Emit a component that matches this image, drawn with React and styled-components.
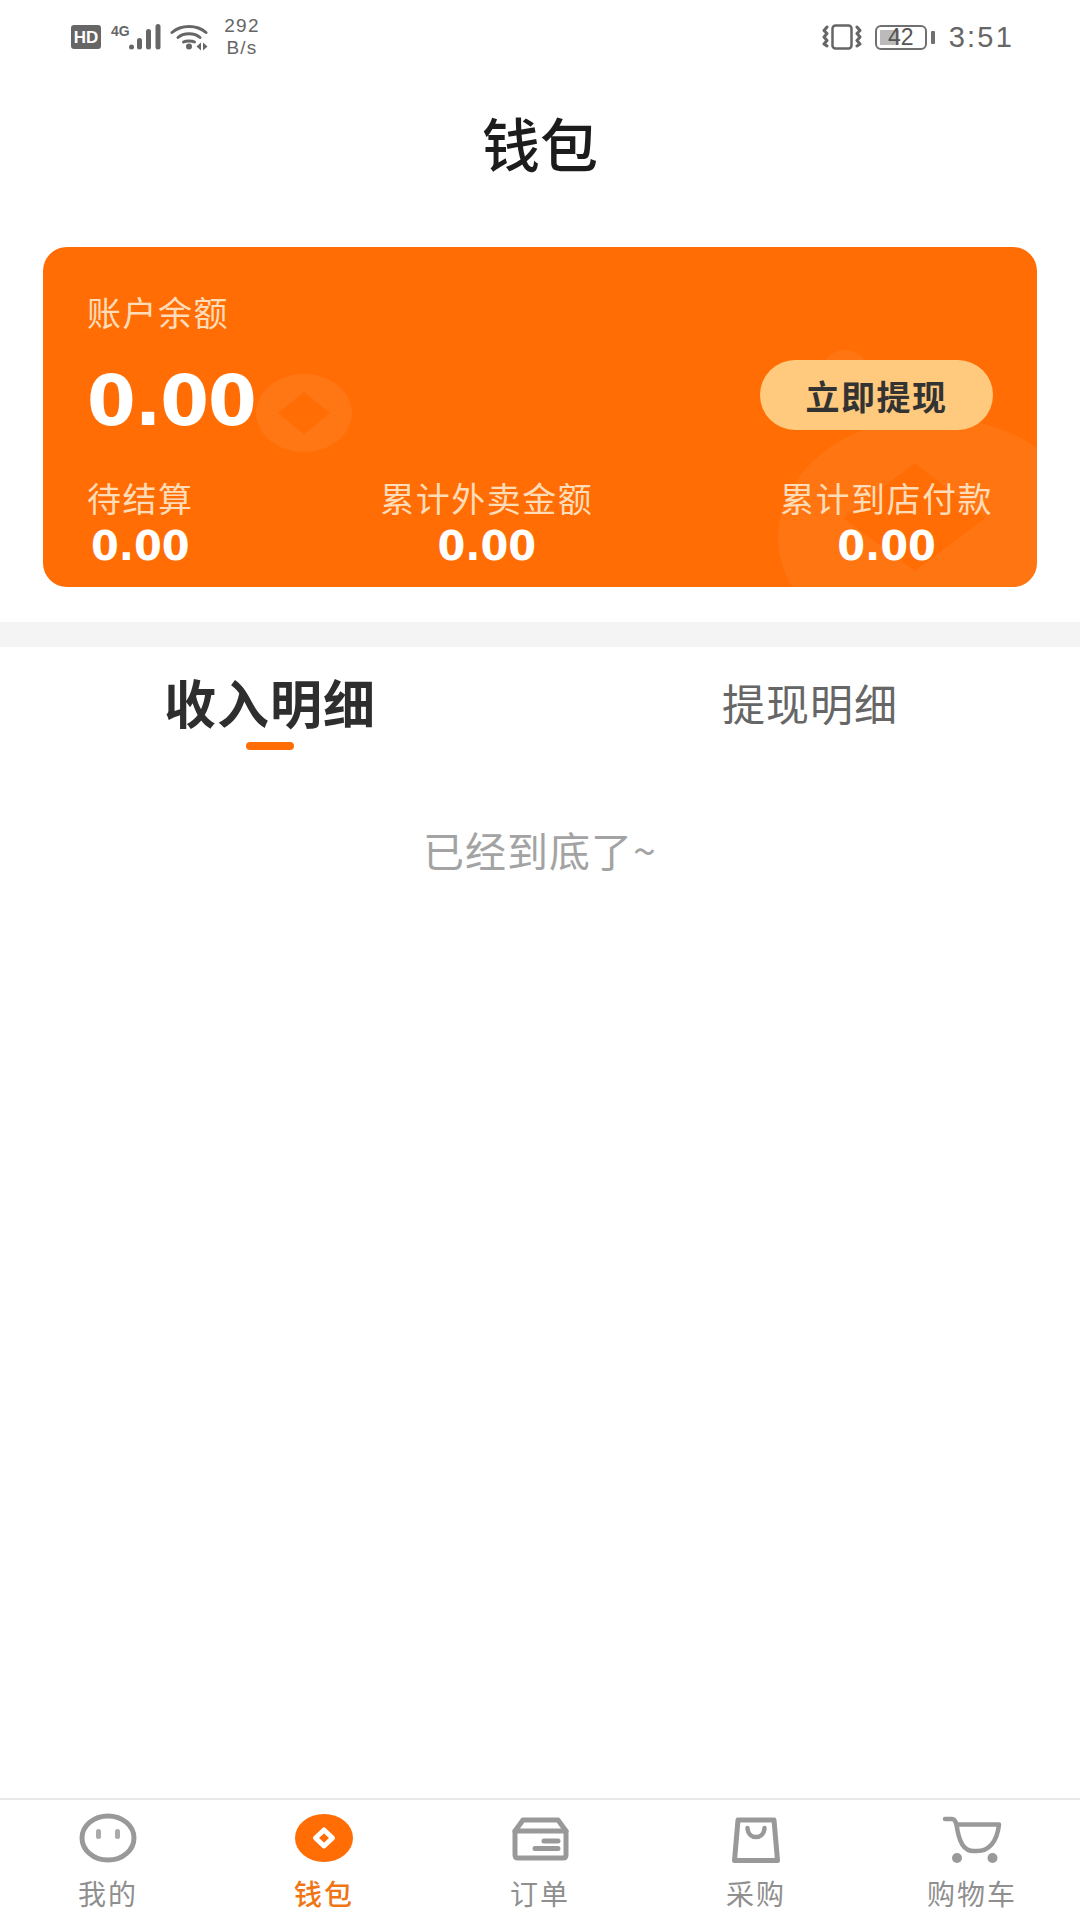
import React from 'react';
import styled, { createGlobalStyle } from 'styled-components';

const ORANGE = '#ff6d04';
const CJK = '"Noto Sans CJK SC", "Liberation Sans", sans-serif';

const GlobalStyle = createGlobalStyle`
  html, body {
    margin: 0;
    padding: 0;
    background: #fff;
  }
  * {
    box-sizing: border-box;
  }
`;

const Page = styled.div`
  width: 1080px;
  height: 1920px;
  display: flex;
  flex-direction: column;
  background: #fff;
  font-family: ${CJK};
  overflow: hidden;
`;

const StatusBar = styled.div`
  height: 74px;
  padding: 0 66px 0 71px;
  display: flex;
  align-items: center;
  justify-content: space-between;
  color: #666;
`;

const StatusGroup = styled.div`
  display: flex;
  align-items: center;
`;

const NetSpeed = styled.div`
  margin-left: 13px;
  width: 42px;
  font: 19px/22px "Liberation Sans", sans-serif;
  letter-spacing: 1.2px;
  text-align: center;
`;

const BatteryBox = styled.div`
  position: relative;
  margin-left: 13px;
  width: 52px;
  height: 25px;
  border: 2.5px solid #707070;
  border-radius: 6px;
  display: flex;
  align-items: center;
  justify-content: center;
  font: 23px/1 "Liberation Sans", sans-serif;
  color: #555;

  &::before {
    content: '';
    position: absolute;
    left: 3px;
    top: 3px;
    bottom: 3px;
    width: 19px;
    background: #bbb;
  }
  &::after {
    content: '';
    position: absolute;
    right: -10px;
    top: 4px;
    width: 4px;
    height: 13px;
    border-radius: 1px;
    background: #707070;
  }
`;

const BatteryLevel = styled.span`
  position: relative;
`;

const Clock = styled.div`
  margin-left: 22px;
  font: 29px/1 "Liberation Sans", sans-serif;
  letter-spacing: 2.2px;
  color: #666;
`;

const Title = styled.h1`
  margin: 0;
  height: 144px;
  padding-bottom: 8px;
  display: flex;
  align-items: center;
  justify-content: center;
  font-size: 58px;
  font-weight: 500;
  color: #1c1c1c;
`;

const CardWrap = styled.div`
  margin-top: 29px;
  padding: 0 43px;
`;

const Card = styled.div`
  position: relative;
  height: 340px;
  padding: 45px 44px 0 44px;
  border-radius: 24px;
  background: ${ORANGE};
  overflow: hidden;
`;

const CoinArt = styled.svg`
  position: absolute;
  left: 0;
  top: 0;
  width: 994px;
  height: 340px;
`;

const CardContent = styled.div`
  position: relative;
`;

const CardLabel = styled.div`
  font-size: 34px;
  line-height: 40px;
  letter-spacing: 1.5px;
  white-space: nowrap;
  color: #ffdcb8;
`;

const BalanceRow = styled.div`
  margin-top: 28px;
  height: 75px;
  display: flex;
  align-items: flex-start;
  justify-content: space-between;
`;

const Balance = styled.div`
  margin-top: 6px;
  font: bold 70px/70px "DejaVu Sans", sans-serif;
  letter-spacing: -1px;
  color: #fff;
`;

const WithdrawButton = styled.button`
  width: 233px;
  height: 70px;
  padding: 0;
  border: 0;
  border-radius: 35px;
  background: #ffca7d;
  color: #333;
  font-family: ${CJK};
  font-size: 34px;
  font-weight: 700;
  letter-spacing: 1.5px;
`;

const Stats = styled.div`
  margin-top: 43px;
  display: flex;
  justify-content: space-between;
`;

const Stat = styled.div`
  display: flex;
  flex-direction: column;
  align-items: center;
`;

const StatValue = styled.div`
  margin-top: 8px;
  font: bold 40px/40px "DejaVu Sans", sans-serif;
  color: #fff;
`;

const Divider = styled.div`
  margin-top: 35px;
  height: 25px;
  background: #f4f4f4;
`;

const Tabs = styled.div`
  height: 119px;
  display: flex;
`;

const Tab = styled.div`
  position: relative;
  flex: 1;
  padding-top: 24px;
  display: flex;
  justify-content: center;
  font-size: ${p => (p.$active ? 52 : 43)}px;
  line-height: 62px;
  font-weight: ${p => (p.$active ? 700 : 400)};
  letter-spacing: 1px;
  color: ${p => (p.$active ? '#2e2e2e' : '#666')};

  ${p =>
    p.$active &&
    `&::after {
      content: '';
      position: absolute;
      left: 246px;
      bottom: 16px;
      width: 48px;
      height: 8px;
      border-radius: 4px;
      background: ${ORANGE};
    }`}
`;

const EndNote = styled.div`
  margin-top: 58px;
  text-align: center;
  font-size: 41px;
  line-height: 50px;
  letter-spacing: 1px;
  color: #a3a3a3;
`;

const Spacer = styled.div`
  flex: 1;
`;

const TabBar = styled.nav`
  height: 122px;
  border-top: 2px solid #e8e8e8;
  display: flex;
  padding-top: 13px;
`;

const TabItem = styled.div`
  flex: 1;
  display: flex;
  flex-direction: column;
  align-items: center;
  font-size: 28px;
  line-height: 36px;
  letter-spacing: 2px;
  white-space: nowrap;
  color: ${p => (p.$active ? '#f07515' : '#8f8f8f')};
  font-weight: ${p => (p.$active ? 500 : 400)};
`;

const TabIcon = styled.svg`
  width: 60px;
  height: 52px;
  margin-bottom: 10px;
  overflow: visible;
`;

const SmallIcon = styled.svg`
  display: block;
  margin-left: ${p => p.$gap || 0}px;
`;

const HdIcon = () => (
  <SmallIcon width="30" height="24" viewBox="0 0 30 24">
    <rect width="30" height="24" rx="3" fill="#666" />
    <text x="15" y="18" textAnchor="middle" fontFamily="Liberation Sans" fontSize="17" fontWeight="700" fill="#fff">HD</text>
  </SmallIcon>
);

const SignalIcon = () => (
  <SmallIcon $gap={10} width="50" height="30" viewBox="0 0 50 30">
    <text x="0" y="14" fontFamily="Liberation Sans" fontSize="14" fontWeight="700" fill="#666">4G</text>
    <circle cx="20.500" cy="25" r="2.500" fill="#666" />
    <rect x="26" y="16" width="5" height="11.500" rx="2.500" fill="#666" />
    <rect x="35" y="7" width="5" height="20.500" rx="2.500" fill="#666" />
    <rect x="44.500" y="2" width="5" height="25.500" rx="2.500" fill="#666" />
  </SmallIcon>
);

const WifiIcon = () => (
  <SmallIcon $gap={9} width="38" height="28" viewBox="0 0 38 28" fill="none" stroke="#666" strokeWidth="3" strokeLinecap="round">
    <path d="M2 9.500C11 1.500 27 1.500 36 9.500" />
    <path d="M8 14.500C13.500 9.500 24.500 9.500 30 14.500" />
    <path d="M13.500 19C16 17.500 22 17.500 24.500 19" />
    <circle cx="19" cy="23.500" r="3" fill="#666" stroke="none" />
    <path d="M26.500 23.500l4.500-4v8zM33 19.500l4.500 4-4.500 4z" fill="#666" stroke="none" />
  </SmallIcon>
);

const VibrateIcon = () => (
  <SmallIcon width="40" height="26" viewBox="0 0 40 26" fill="none" stroke="#666" strokeLinecap="round" strokeLinejoin="round">
    <rect x="10.500" y="1.500" width="19" height="23" rx="3" strokeWidth="2.500" />
    <path d="M5 3l-3 3.500 3 3-3 3.500 3 3.500-3 3.500 3 2" strokeWidth="3" />
    <path d="M35 3l3 3.500-3 3 3 3.500-3 3.500 3 3.500-3 2" strokeWidth="3" />
  </SmallIcon>
);

const FaceIcon = () => (
  <TabIcon viewBox="0 0 60 52" fill="none">
    <ellipse cx="30" cy="25" rx="26" ry="22" stroke="#999" strokeWidth="5" />
    <rect x="18" y="16" width="5" height="10" rx="2.500" fill="#aaa" />
    <rect x="37" y="16" width="5" height="10" rx="2.500" fill="#aaa" />
  </TabIcon>
);

const WalletIcon = () => (
  <TabIcon viewBox="0 0 60 52">
    <ellipse cx="30" cy="25" rx="29" ry="24" fill={ORANGE} />
    <path d="M30 17L38.500 25L30 33L21.500 25Z" fill="none" stroke="#fff" strokeWidth="5" strokeLinejoin="round" />
  </TabIcon>
);

const OrderIcon = () => (
  <TabIcon viewBox="0 0 60 52" fill="none" stroke="#999" strokeWidth="5" strokeLinecap="round" strokeLinejoin="round">
    <path d="M5 18L13 7H48L56 18V42Q56 45 53 45H8Q5 45 5 42Z" />
    <path d="M5 18H56" />
    <path d="M34 28H48M25 35.500H48" />
  </TabIcon>
);

const BagIcon = () => (
  <TabIcon viewBox="0 0 60 52" fill="none" stroke="#999" strokeLinecap="round" strokeLinejoin="round">
    <path d="M12 7H48L51.500 47.500H8.500Z" strokeWidth="5" />
    <path d="M21.500 15C22 27 38 27 38.500 15" strokeWidth="4.500" />
  </TabIcon>
);

const CartIcon = () => (
  <TabIcon viewBox="0 0 60 52" fill="none" stroke="#999" strokeLinecap="round" strokeLinejoin="round">
    <path d="M3 6H10C12 6 13.500 8 14.500 11.500" strokeWidth="4.500" />
    <path d="M14.500 11.500H57C55 30 46 38 35 38H32C22 38 17 30 14.500 11.500Z" strokeWidth="4.500" />
    <circle cx="15" cy="45" r="5" fill="#999" stroke="none" />
    <circle cx="50.500" cy="45" r="5" fill="#999" stroke="none" />
  </TabIcon>
);

const stats = [
  { label: '待结算', value: '0.00' },
  { label: '累计外卖金额', value: '0.00' },
  { label: '累计到店付款', value: '0.00' },
];

const navItems = [
  { label: '我的', Icon: FaceIcon },
  { label: '钱包', Icon: WalletIcon, active: true },
  { label: '订单', Icon: OrderIcon },
  { label: '采购', Icon: BagIcon },
  { label: '购物车', Icon: CartIcon },
];

export default function App() {
  return (
    <Page>
      <GlobalStyle />
      <StatusBar>
        <StatusGroup>
          <HdIcon />
          <SignalIcon />
          <WifiIcon />
          <NetSpeed>292<br />B/s</NetSpeed>
        </StatusGroup>
        <StatusGroup>
          <VibrateIcon />
          <BatteryBox><BatteryLevel>42</BatteryLevel></BatteryBox>
          <Clock>3:51</Clock>
        </StatusGroup>
      </StatusBar>
      <Title>钱包</Title>
      <CardWrap>
        <Card>
          <CoinArt viewBox="0 0 994 340">
            <path fillRule="evenodd" fill="#fff" fillOpacity="0.07" d="M261 127a48 39 0 1 0 0.010 0ZM261 145l-26 21 26 21 26-21Z" />
            <path fillRule="evenodd" fill="#fff" fillOpacity="0.06" d="M890 170a155 120 0 1 0 0.010 0ZM872 216l-72 55 72 53 70-53Z" />
            <ellipse cx="802" cy="118" rx="20" ry="15" fill="#fff" fillOpacity="0.06" />
          </CoinArt>
          <CardContent>
            <CardLabel>账户余额</CardLabel>
            <BalanceRow>
              <Balance>0.00</Balance>
              <WithdrawButton>立即提现</WithdrawButton>
            </BalanceRow>
            <Stats>
              {stats.map(s => (
                <Stat key={s.label}>
                  <CardLabel>{s.label}</CardLabel>
                  <StatValue>{s.value}</StatValue>
                </Stat>
              ))}
            </Stats>
          </CardContent>
        </Card>
      </CardWrap>
      <Divider />
      <Tabs>
        <Tab $active>收入明细</Tab>
        <Tab>提现明细</Tab>
      </Tabs>
      <EndNote>已经到底了~</EndNote>
      <Spacer />
      <TabBar>
        {navItems.map(({ label, Icon, active }) => (
          <TabItem key={label} $active={active}>
            <Icon />
            {label}
          </TabItem>
        ))}
      </TabBar>
    </Page>
  );
}
